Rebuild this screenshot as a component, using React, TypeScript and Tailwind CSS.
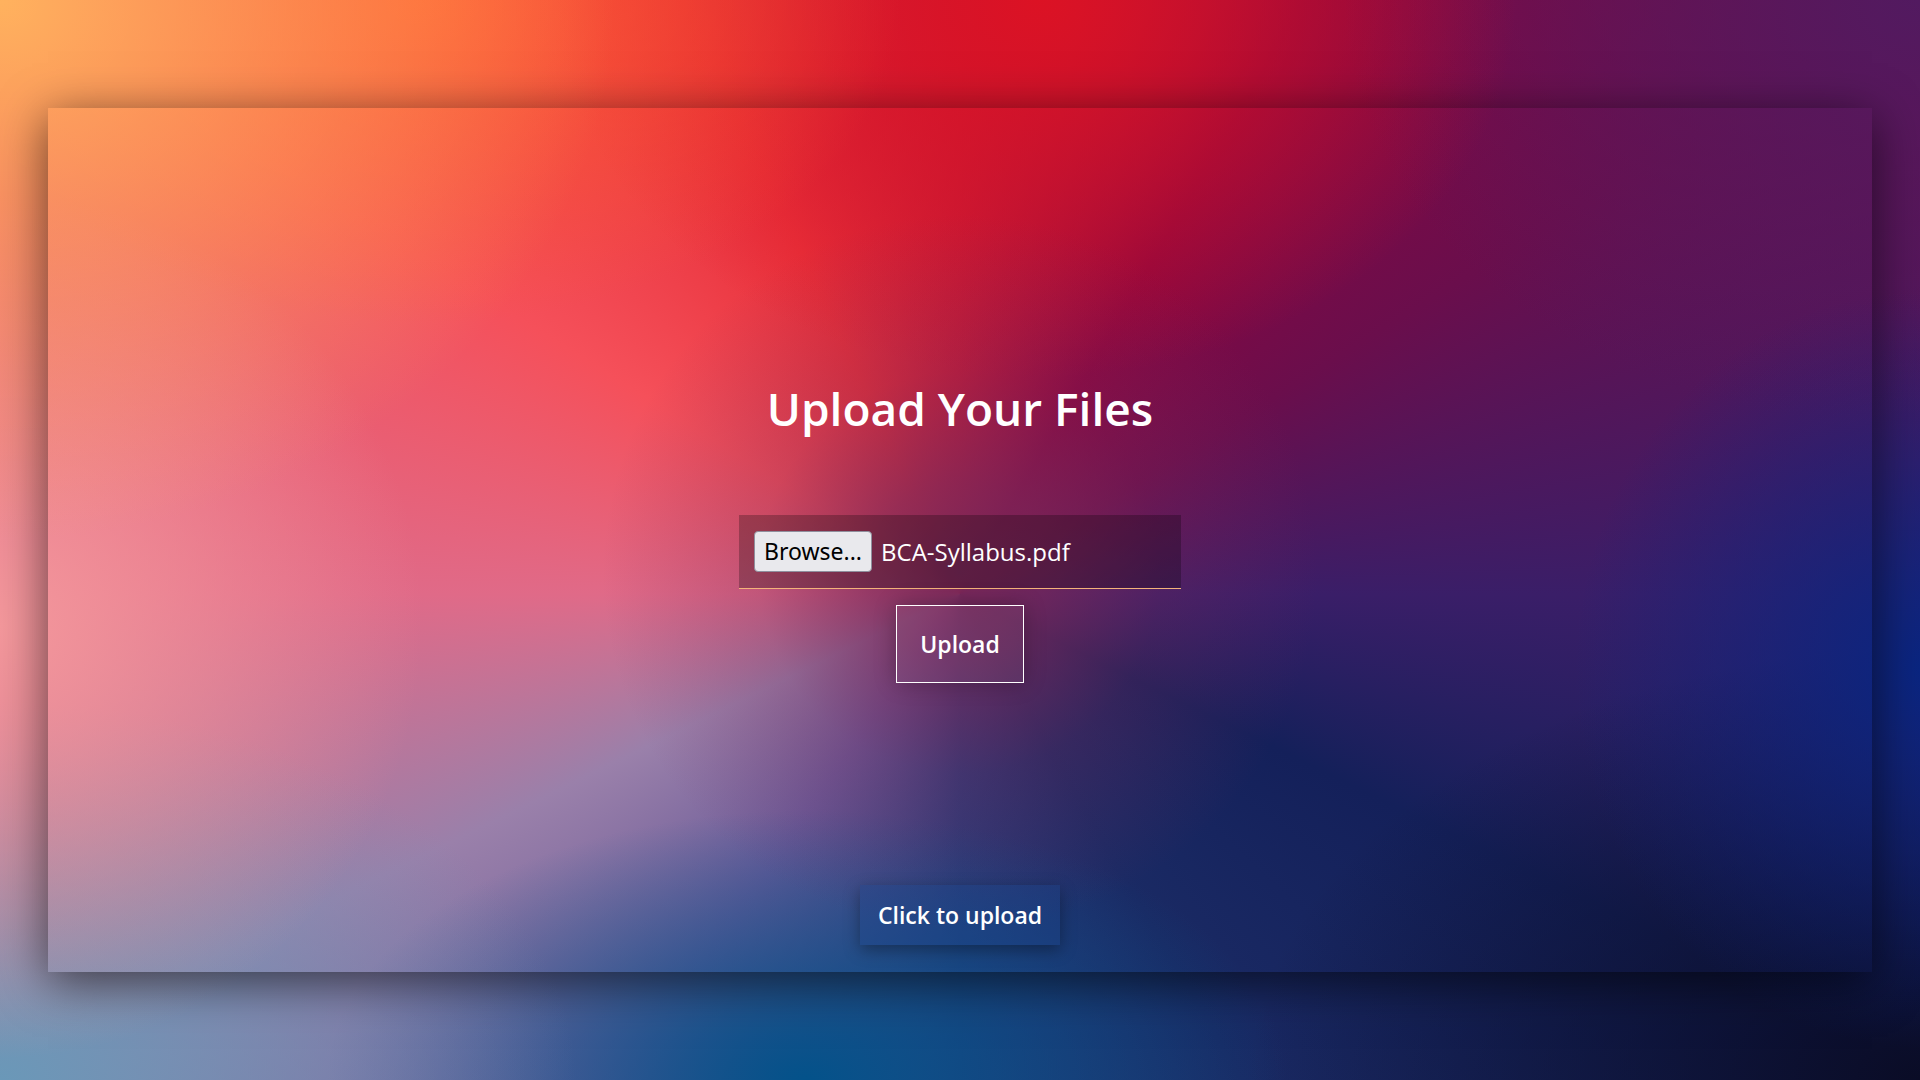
import React from "react";

const App: React.FC = () => {
  return (
    <div className="w-full h-[1080px] overflow-hidden flex items-start justify-center pt-[108px] font-['Open_Sans',sans-serif] bg-[radial-gradient(circle_at_50%_53%,rgba(122,40,90,1)_0%,rgba(122,40,90,0.75)_8%,rgba(122,40,90,0.3)_18%,rgba(122,40,90,0)_32%),radial-gradient(ellipse_32%_50%_at_0%_0%,rgba(255,178,94,1)_0%,rgba(255,178,94,0)_100%),radial-gradient(ellipse_25%_30%_at_22%_0%,rgba(255,96,48,0.9)_0%,rgba(255,96,48,0)_100%),radial-gradient(ellipse_25%_35%_at_54%_0%,rgba(220,18,36,1)_0%,rgba(220,18,36,0)_100%),radial-gradient(ellipse_22%_40%_at_0%_58%,rgba(244,152,156,1)_0%,rgba(244,152,156,0)_100%),radial-gradient(ellipse_30%_35%_at_0%_100%,rgba(106,152,184,1)_0%,rgba(106,152,184,0)_100%),radial-gradient(ellipse_25%_25%_at_42%_100%,rgba(3,82,138,1)_0%,rgba(3,82,138,0)_100%),radial-gradient(ellipse_18%_35%_at_100%_62%,rgba(10,37,128,1)_0%,rgba(10,37,128,0)_100%),radial-gradient(ellipse_35%_40%_at_100%_100%,rgba(10,12,38,1)_0%,rgba(10,12,38,0)_100%),radial-gradient(ellipse_30%_40%_at_100%_0%,rgba(82,26,96,1)_0%,rgba(82,26,96,0)_100%),conic-gradient(from_0deg_at_50%_55%,#c41a38_0deg,#8a0640_30deg,#6a0e4c_58deg,#3a1e68_90deg,#14205a_116deg,#1a2a64_150deg,#2a3a78_180deg,#6a5a98_215deg,#9a80aa_244deg,#e06a88_270deg,#f5505a_302deg,#e8303a_335deg,#c41a38_360deg)]">
      {/* card */}
      <div className="w-[1824px] h-[864px] flex flex-col items-center pt-[277px] shadow-[0_10px_45px_rgba(0,0,0,0.6)]">
        <h1 className="text-[46px] leading-none font-semibold text-white">Upload Your Files</h1>

        <div className="mt-[84px] w-[442px] h-[74px] flex items-center pl-[15px] bg-black/25 border-b border-[#f3b37a]">
          <span className="h-[41px] px-[9px] flex items-center rounded-[4px] border border-[#8f8f9d] bg-[#e9e9ed] text-black text-[23px] font-['Noto_Sans',sans-serif]">
            Browse...
          </span>
          <span className="ml-[9px] text-white text-[24px] font-medium">BCA-Syllabus.pdf</span>
        </div>

        <button className="mt-[16px] w-[128px] h-[78px] border border-white text-white text-[23px] font-semibold bg-white/5 shadow-[0_0_20px_rgba(0,0,0,0.25)]">
          Upload
        </button>

        <div className="mt-auto mb-[27px] h-[60px] px-[18px] flex items-center text-white text-[23px] font-semibold bg-[rgba(30,70,140,0.35)] shadow-[0_5px_15px_rgba(0,0,0,0.35)]">
          Click to upload
        </div>
      </div>
    </div>
  );
};

export default App;
